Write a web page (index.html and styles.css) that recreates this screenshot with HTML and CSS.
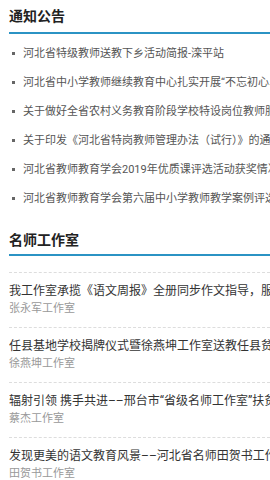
FILE: index.html
```html
<!DOCTYPE html>
<html lang="zh-CN">

<head>
    <meta charset="UTF-8">
    <meta name="viewport" content="width=device-width, initial-scale=1.0">
    <title>通知公告</title>
    <link rel="stylesheet" href="styles.css">
</head>

<body>
    <div class="block notice">
        <h2 class="block-title">通知公告</h2>
        <ul class="notice-list">
            <li>河北省特级教师送教下乡活动简报-滦平站</li>
            <li>河北省中小学教师继续教育中心扎实开展“不忘初心、牢记使命”主题教育</li>
            <li>关于做好全省农村义务教育阶段学校特设岗位教师服务期满考核工作的通知</li>
            <li>关于印发《河北省特岗教师管理办法（试行）》的通知</li>
            <li>河北省教师教育学会2019年优质课评选活动获奖情况公示</li>
            <li>河北省教师教育学会第六届中小学教师教学案例评选结果公示</li>
        </ul>
    </div>

    <div class="block studio">
        <h2 class="block-title">名师工作室</h2>
        <ul class="studio-list">
            <li>
                <div class="studio-title">我工作室承揽《语文周报》全册同步作文指导，服务全省师生</div>
                <div class="studio-name">张永军工作室</div>
            </li>
            <li>
                <div class="studio-title">任县基地学校揭牌仪式暨徐燕坤工作室送教任县贫困地区</div>
                <div class="studio-name">徐燕坤工作室</div>
            </li>
            <li>
                <div class="studio-title">辐射引领 携手共进––邢台市“省级名师工作室”扶贫送教活动</div>
                <div class="studio-name">蔡杰工作室</div>
            </li>
            <li>
                <div class="studio-title">发现更美的语文教育风景––河北省名师田贺书工作室活动纪实</div>
                <div class="studio-name">田贺书工作室</div>
            </li>
        </ul>
    </div>
</body>

</html>
```

FILE: styles.css
```css
body {
    font-family: Roboto, "Noto Sans CJK SC", sans-serif;
    margin: 0;
    padding: 0;
    background-color: #fff;
    overflow: hidden;
}

.block {
    padding-left: 9px;
}

.block-title {
    margin: 0;
    padding: 6px 0 6px 0;
    font-size: 14px;
    line-height: 20px;
    font-weight: bold;
    color: #222;
    border-bottom: 2px solid #2b93c4;
}

.notice-list {
    list-style: none;
    margin: 5px 0 0 0;
    padding: 0;
}

.notice-list li {
    position: relative;
    height: 29px;
    line-height: 29px;
    padding-left: 14px;
    font-size: 11px;
    color: #555;
    white-space: nowrap;
    overflow: hidden;
}

.notice-list li::before {
    content: "";
    position: absolute;
    left: 3px;
    top: 13px;
    width: 3px;
    height: 3px;
    background-color: #666;
}

.studio {
    margin-top: 17px;
}

.studio .block-title {
    padding-top: 0;
    padding-bottom: 4px;
}

.studio-list {
    list-style: none;
    margin: 16px 0 0 0;
    padding: 0;
}

.studio-list li {
    border-top: 1px dashed #ddd;
    padding: 9px 0 10px 0;
    white-space: nowrap;
    overflow: hidden;
}

.studio-title {
    font-size: 12px;
    line-height: 19px;
    color: #333;
}

.studio-name {
    font-size: 11px;
    line-height: 16px;
    color: #999;
}
```
